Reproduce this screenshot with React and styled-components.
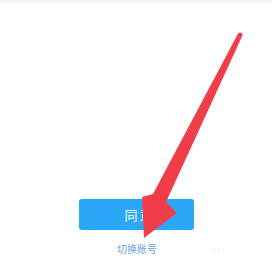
import React from 'react';
import styled, { createGlobalStyle } from 'styled-components';

const GlobalStyle = createGlobalStyle`
  html, body {
    margin: 0;
    padding: 0;
    background: #ffffff;
  }
`;

// Styled components
const Screen = styled.div`
  position: relative;
  width: 272px;
  height: 256px;
  overflow: hidden;
  display: flex;
  flex-direction: column;
  align-items: center;
  background: #ffffff;
  font-family: "Noto Sans CJK SC", "Noto Sans", sans-serif;
`;

const TopShade = styled.div`
  align-self: stretch;
  height: 4px;
  background: linear-gradient(#f2f2f2, #ffffff);
`;

const Spacer = styled.div`
  flex: 1;
`;

const AgreeButton = styled.button`
  width: 115px;
  height: 31px;
  border: none;
  border-radius: 3px;
  background: #2aa7f7;
  color: #ffffff;
  font-family: inherit;
  font-size: 13px;
  letter-spacing: 2px;
  padding: 0 0 0 7px;
`;

const SwitchLink = styled.div`
  margin-top: 12px;
  margin-left: 2px;
  font-size: 10px;
  line-height: 14px;
  color: #6a9fdd;
`;

const Overlay = styled.svg`
  position: absolute;
  left: 0;
  top: 0;
  pointer-events: none;
`;

const App = () => {
  return (
    <Screen>
      <GlobalStyle />
      <TopShade />
      <Spacer />
      <AgreeButton>同意</AgreeButton>
      <SwitchLink>切换账号</SwitchLink>
      <Overlay width="272" height="256" viewBox="0 0 272 256">
        <path
          d="M237.8 34 L153 194 L142 197 L144 238 L177 213 L166 202 L242.2 36 A2.4 2.4 0 0 0 237.8 34 Z"
          fill="#ef3d4a"
        />
        <path
          d="M212 250 c0 -2 2 -3 3.5 -1.5 c1.5 -1.5 3.5 -0.5 3.5 1.5 c0 2 -3.5 4 -3.5 4 c0 0 -3.5 -2 -3.5 -4 Z"
          fill="none"
          stroke="#ececec"
          strokeWidth="0.8"
        />
      </Overlay>
    </Screen>
  );
};

export default App;
